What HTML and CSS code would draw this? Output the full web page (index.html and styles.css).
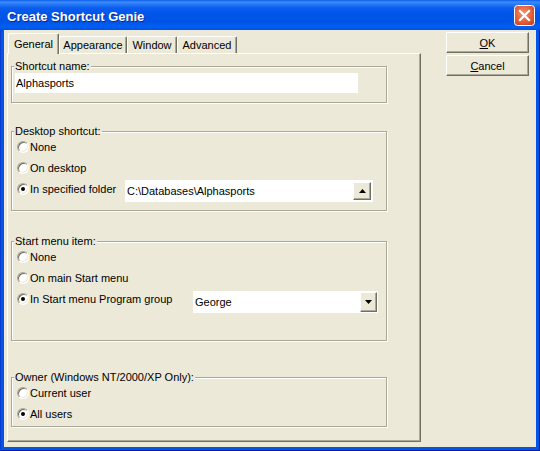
FILE: index.html
```html
<!DOCTYPE html>
<html>
<head>
<meta charset="utf-8">
<title>Create Shortcut Genie</title>
<link rel="stylesheet" href="styles.css">
</head>
<body>
<div class="window">
  <div class="titlebar">
    <span class="title">Create Shortcut Genie</span>
    <div class="close">
      <svg width="21" height="21" viewBox="0 0 21 21">
        <defs>
          <radialGradient id="cg" cx="45%" cy="40%" r="70%">
            <stop offset="0" stop-color="#F29473"/>
            <stop offset="0.6" stop-color="#E2603A"/>
            <stop offset="1" stop-color="#C8421C"/>
          </radialGradient>
        </defs>
        <rect x="0.5" y="0.5" width="20" height="20" rx="3" fill="url(#cg)" stroke="#fff"/>
        <path d="M6 6 L15 15 M15 6 L6 15" stroke="#fff" stroke-width="2.2" stroke-linecap="square"/>
      </svg>
    </div>
  </div>
  <div class="client">
    <div class="tabarea">
      <div class="tabs">
        <div class="tab active t-general">General</div>
        <div class="tab t-appearance">Appearance</div>
        <div class="tab t-window">Window</div>
        <div class="tab t-advanced">Advanced</div>
      </div>
      <div class="panel">
        <div class="group g1">
          <div class="gtitle">Shortcut name:</div>
          <div class="textbox">Alphasports</div>
        </div>
        <div class="group g2">
          <div class="gtitle">Desktop shortcut:</div>
          <div class="row first"><span class="radio"></span><span>None</span></div>
          <div class="row"><span class="radio"></span><span>On desktop</span></div>
          <div class="row">
            <span class="radio on"></span><span class="lbl-folder">In specified folder</span>
            <div class="combo folder">
              <span class="combo-text">C:\Databases\Alphasports</span>
              <span class="combo-btn">
                <svg width="7" height="4" viewBox="0 0 7 4"><path d="M3.5 0 L7 4 L0 4 Z" fill="#000"/></svg>
              </span>
            </div>
          </div>
        </div>
        <div class="group g3">
          <div class="gtitle">Start menu item:</div>
          <div class="row first"><span class="radio"></span><span>None</span></div>
          <div class="row"><span class="radio"></span><span>On main Start menu</span></div>
          <div class="row">
            <span class="radio on"></span><span class="lbl-group">In Start menu Program group</span>
            <div class="combo dropdown">
              <span class="combo-text">George</span>
              <span class="combo-btn">
                <svg width="7" height="4" viewBox="0 0 7 4"><path d="M0 0 L7 0 L3.5 4 Z" fill="#000"/></svg>
              </span>
            </div>
          </div>
        </div>
        <div class="group g4">
          <div class="gtitle">Owner (Windows NT/2000/XP Only):</div>
          <div class="row first"><span class="radio"></span><span>Current user</span></div>
          <div class="row"><span class="radio on"></span><span>All users</span></div>
        </div>
      </div>
    </div>
    <div class="side">
      <div class="btn"><span><u>O</u>K</span></div>
      <div class="btn"><span><u>C</u>ancel</span></div>
    </div>
  </div>
</div>
</body>
</html>
```

FILE: styles.css
```css
html, body {
  margin: 0;
  padding: 0;
  background: #ECE9D8;
}
body {
  font-family: "Liberation Sans", Arial, sans-serif;
  font-size: 11px;
  color: #000;
}
.window {
  width: 540px;
  height: 451px;
  box-sizing: border-box;
  display: flex;
  flex-direction: column;
  background: #0654E6;
  box-shadow: inset 1px 0 #0A3ED0, inset -1px 0 #001EA0, inset 0 -1px #001EA0;
}
.titlebar {
  height: 30px;
  flex: none;
  display: flex;
  align-items: center;
  justify-content: space-between;
  padding: 0 5px 0 7px;
  background: linear-gradient(#0A5BEB 0px, #3C8DF8 2px, #2B7BF6 4px, #0A5DEF 8px, #0055E8 14px, #0054E5 22px, #0060F4 27px, #0050E0 30px);
}
.title {
  color: #fff;
  font-weight: bold;
  font-size: 13px;
  text-shadow: 1px 1px #0A2A8C;
  padding-top: 2px;
}
.close {
  width: 21px;
  height: 21px;
  margin-top: 1px;
}
.close svg {
  display: block;
}
.client {
  flex: 1;
  margin: 0 4px 4px 4px;
  background: #ECE9D8;
  display: flex;
  padding: 2px 0 0 3px;
}
.tabarea {
  margin-top: 1px;
  display: flex;
  flex-direction: column;
}
.tabs {
  display: flex;
  align-items: flex-end;
  height: 20px;
  padding-left: 1px;
}
.tab {
  height: 17px;
  box-sizing: border-box;
  border: 1px solid #fff;
  border-bottom: none;
  border-right-color: #716F64;
  box-shadow: inset -1px 0 #ACA899;
  border-radius: 2px 2px 0 0;
  display: flex;
  align-items: center;
  justify-content: center;
  background: #ECE9D8;
}
.tab.active {
  height: 21px;
  margin-bottom: -1px;
  position: relative;
  z-index: 1;
}
.t-general { width: 51px; }
.t-appearance { width: 68px; }
.t-window { width: 50px; }
.t-advanced { width: 60px; }
.panel {
  width: 414px;
  height: 389px;
  box-sizing: border-box;
  border-top: 1px solid #fff;
  border-left: 1px solid #fff;
  border-right: 1px solid #716F64;
  border-bottom: 1px solid #716F64;
  box-shadow: inset -1px -1px #ACA899;
  padding: 12px 0 0 3px;
}
.group {
  width: 376px;
  box-sizing: border-box;
  border: 1px solid #ACA899;
  box-shadow: inset 1px 1px #fff, 1px 1px #fff;
}
.g1 { height: 37px; }
.g2 { height: 80px; margin-top: 28px; }
.g3 { height: 100px; margin-top: 30px; }
.g4 { height: 50px; margin-top: 36px; }
.gtitle {
  margin: -7px 0 0 2px;
  line-height: 13px;
  height: 13px;
  background: #ECE9D8;
  padding: 0 1px;
  width: fit-content;
}
.textbox {
  margin-left: 3px;
  width: 343px;
  height: 20px;
  line-height: 20px;
  background: #fff;
  padding-left: 1px;
  box-sizing: border-box;
}
.row {
  display: flex;
  align-items: center;
  height: 13px;
  margin-top: 8px;
  padding-left: 5px;
}
.row.first {
  margin-top: 2px;
}
.radio {
  flex: none;
  width: 12px;
  height: 12px;
  box-sizing: border-box;
  border-radius: 50%;
  background: #fff;
  border: 1px solid;
  border-color: #ACA899 #fff #fff #ACA899;
  box-shadow: inset 1px 1px #716F64, inset -1px -1px #ECE9D8;
  display: flex;
  align-items: center;
  justify-content: center;
  margin-right: 1px;
}
.radio.on::after {
  content: "";
  width: 4px;
  height: 4px;
  border-radius: 50%;
  background: #000;
}
.lbl-folder {
  width: 95px;
  flex: none;
}
.lbl-group {
  width: 163px;
  flex: none;
}
.combo {
  align-self: flex-start;
  display: flex;
  align-items: center;
  background: #fff;
  box-sizing: border-box;
  flex: none;
}
.combo.folder {
  margin-top: -2px;
  width: 248px;
  height: 22px;
  padding: 2px;
}
.combo.dropdown {
  margin-top: -1px;
  width: 185px;
  height: 22px;
  padding: 1px;
}
.combo-text {
  flex: 1;
  white-space: nowrap;
}
.dropdown .combo-text {
  padding-left: 1px;
}
.combo-btn {
  flex: none;
  box-sizing: border-box;
  background: #ECE9D8;
  border: 1px solid;
  border-color: #fff #716F64 #716F64 #fff;
  box-shadow: inset -1px -1px #ACA899;
  display: flex;
  align-items: center;
  justify-content: center;
}
.folder .combo-btn {
  width: 18px;
  height: 18px;
}
.dropdown .combo-btn {
  width: 17px;
  height: 20px;
}
.combo-btn svg {
  display: block;
}
.side {
  margin-left: 25px;
  display: flex;
  flex-direction: column;
  gap: 2px;
}
.btn {
  width: 83px;
  height: 21px;
  box-sizing: border-box;
  background: #ECE9D8;
  border: 1px solid;
  border-color: #fff #716F64 #716F64 #fff;
  box-shadow: inset -1px -1px #ACA899;
  display: flex;
  align-items: center;
  justify-content: center;
}
```
